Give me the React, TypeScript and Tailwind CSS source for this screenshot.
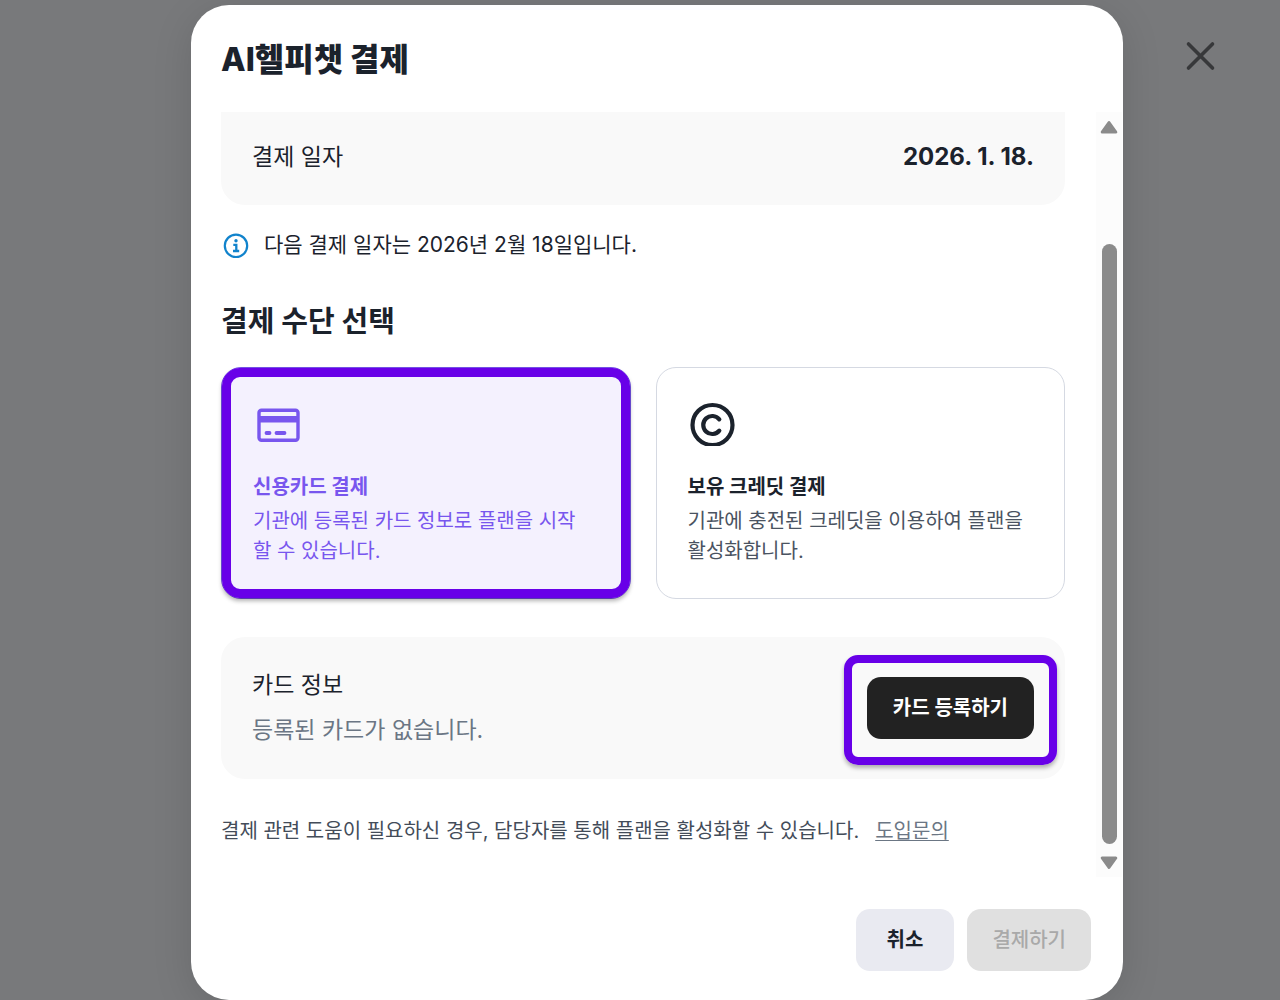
import { useState, type ReactNode } from 'react';

type Method = 'card' | 'credit';

function CloseIcon() {
  return (
    <svg className="h-8 w-8" viewBox="0 0 32 32" fill="none" stroke="currentColor" strokeWidth={3.6} strokeLinecap="round">
      <path d="M4.5 4 28.5 28M28.5 4 4.5 28" />
    </svg>
  );
}

function InfoIcon() {
  return (
    <svg className="h-[30px] w-[30px] shrink-0 text-[#1183cc]" viewBox="0 0 30 30" fill="none" stroke="currentColor">
      <circle cx="15" cy="15.8" r="11.2" strokeWidth={2.2} />
      <circle cx="15" cy="10.8" r="1.7" fill="currentColor" stroke="none" />
      <path d="M12.3 14.9h3v6M12 21h6.2" strokeWidth={2.3} />
    </svg>
  );
}

function CreditCardIcon() {
  return (
    <svg className="h-[50px] w-[50px]" viewBox="0 0 50 50" fill="none" stroke="currentColor">
      <rect x="6" y="10.2" width="39" height="30" rx="2.5" strokeWidth={3.4} />
      <path d="M5 19.2h41" strokeWidth={6.6} />
      <path d="M13.5 33h3M23.5 33h8" strokeWidth={3.8} strokeLinecap="round" />
    </svg>
  );
}

function CopyrightIcon() {
  return (
    <svg className="h-[46px] w-[50px]" viewBox="0 0 50 46" fill="none" stroke="currentColor" strokeWidth={4.2}>
      <circle cx="24.5" cy="25" r="20" />
      <path d="M31.3 19.4a9 9 0 1 0 0 11.2" strokeLinecap="round" />
    </svg>
  );
}

interface MethodCardProps {
  icon: ReactNode;
  title: string;
  description: string;
  checked: boolean;
  onSelect: () => void;
}

function MethodCard({ icon, title, description, checked, onSelect }: MethodCardProps) {
  return (
    <label
      className={`relative block cursor-pointer rounded-[20px] border py-8 pr-10 pl-[31px] text-xl leading-[30px] ${
        checked ? 'border-[#7553e8] bg-[#f4f1fe] text-[#7856ee]' : 'border-[#d5d9e2] bg-white text-[#1b222c]'
      }`}
    >
      <input type="radio" name="method" className="sr-only" checked={checked} onChange={onSelect} />
      <span className="block h-[50px]">{icon}</span>
      <span className="mt-[22px] block font-bold">{title}</span>
      <span className={`mt-1 block ${checked ? '' : 'text-[#4a5361]'}`}>{description}</span>
      {checked && (
        <span className="pointer-events-none absolute inset-0 rounded-[18px] border-[9px] border-[#6800e8] shadow-[0_3px_4px_rgba(0,0,0,0.3)]" />
      )}
    </label>
  );
}

// Decorative scroll rail shown beside the dialog body
function ScrollRail() {
  return (
    <div className="mr-px flex w-[26px] shrink-0 flex-col items-center bg-[#fcfcfc] pt-2 pb-[7px] text-[#8b8b8b]" aria-hidden="true">
      <svg className="h-[14px] w-[18px]" viewBox="0 0 18 14" fill="currentColor" stroke="currentColor" strokeWidth={3} strokeLinejoin="round">
        <path d="M9 2.5 15.8 12h-13.6Z" />
      </svg>
      <div className="mt-[110px] mb-3 w-[15px] flex-1 rounded-full bg-[#8b8b8b]" />
      <svg className="h-[14px] w-[18px]" viewBox="0 0 18 14" fill="currentColor" stroke="currentColor" strokeWidth={3} strokeLinejoin="round">
        <path d="M9 11.5 2.2 2h13.6Z" />
      </svg>
    </div>
  );
}

export default function App() {
  const [method, setMethod] = useState<Method>('card');

  return (
    <div className="relative flex h-screen justify-center overflow-hidden bg-[#78797b] pt-[5px] pl-[34px] font-['Inter','Noto_Sans_CJK_KR',sans-serif] text-[#1b222c]">
      <div
        role="dialog"
        aria-labelledby="dialog-title"
        className="flex w-full max-w-[932px] flex-col overflow-hidden rounded-[38px] bg-white shadow-[0_8px_40px_rgba(0,0,0,0.12)]"
      >
        <header className="px-[30px] pt-[33px] pb-[30px]">
          <h1 id="dialog-title" className="text-[32px] leading-[44px] font-extrabold">AI헬피챗 결제</h1>
        </header>

        <div className="flex min-h-0 flex-1">
          <div className="min-w-0 flex-1 overflow-hidden pr-[31px] pl-[30px]">
            <div className="flex items-center justify-between rounded-b-3xl bg-[#f9f9f9] px-[31px] pt-7 pb-[31px] leading-[34px]">
              <span className="text-[23px]">결제 일자</span>
              <span className="text-2xl leading-[34px] font-bold">2026. 1. 18.</span>
            </div>

            <p className="mt-6 flex items-center gap-[13px] text-[21px] leading-8">
              <InfoIcon />
              다음 결제 일자는 2026년 2월 18일입니다.
            </p>

            <h2 className="mt-[42px] text-[29px] leading-[38px] font-bold">결제 수단 선택</h2>

            <div className="mt-[26px] grid grid-cols-2 gap-[25px]">
              <MethodCard
                icon={<CreditCardIcon />}
                title="신용카드 결제"
                description="기관에 등록된 카드 정보로 플랜을 시작할 수 있습니다."
                checked={method === 'card'}
                onSelect={() => setMethod('card')}
              />
              <MethodCard
                icon={<CopyrightIcon />}
                title="보유 크레딧 결제"
                description="기관에 충전된 크레딧을 이용하여 플랜을 활성화합니다."
                checked={method === 'credit'}
                onSelect={() => setMethod('credit')}
              />
            </div>

            <div className="mt-[38px] flex items-center justify-between rounded-3xl bg-[#f9f9f9] px-[31px] pt-[31px] pb-8 text-[23px] leading-[34px]">
              <div>
                <p>카드 정보</p>
                <p className="mt-[11px] text-[#6b7684]">등록된 카드가 없습니다.</p>
              </div>
              <div className="relative">
                <button type="button" className="h-[62px] rounded-[14px] bg-[#222222] px-[26px] text-xl font-bold text-white">
                  카드 등록하기
                </button>
                <span className="pointer-events-none absolute -inset-x-[23px] -top-[22px] -bottom-[26px] rounded-[14px] border-8 border-[#6800e8] shadow-[0_3px_4px_rgba(0,0,0,0.3)]" />
              </div>
            </div>

            <p className="mt-[37px] text-xl leading-[30px] text-[#434c59]">
              결제 관련 도움이 필요하신 경우, 담당자를 통해 플랜을 활성화할 수 있습니다.
              <a href="#contact" className="ml-4 text-[#6b7684] underline decoration-1 underline-offset-2">도입문의</a>
            </p>
          </div>
          <ScrollRail />
        </div>

        <footer className="flex justify-end gap-[13px] px-8 pt-8 pb-[29px] text-xl">
          <button type="button" className="h-[62px] rounded-[14px] bg-[#e9eaf1] px-[31px] font-bold">취소</button>
          <button type="button" disabled className="h-[62px] rounded-[14px] bg-[#e0e0e0] px-[25px] font-medium text-[#a9a9a9]">결제하기</button>
        </footer>
      </div>

      <button type="button" aria-label="닫기" className="absolute top-10 right-16 text-[#37383a]">
        <CloseIcon />
      </button>
    </div>
  );
}
